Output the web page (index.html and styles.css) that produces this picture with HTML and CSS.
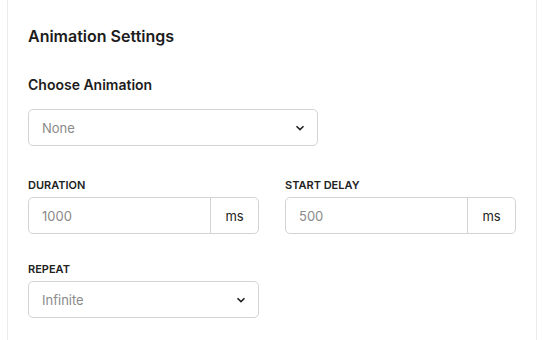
FILE: index.html
```html
<!DOCTYPE html>
<html lang="en">
  <head>
    <meta charset="UTF-8" />
    <title>Animation Settings</title>
    <link rel="stylesheet" href="styles.css">
  </head>
  <body>
    <div class="panel">
      <h2 class="panel-title">Animation Settings</h2>

      <h3 class="field-title">Choose Animation</h3>
      <div class="select select-wide">
        <span class="select-value">None</span>
        <svg class="chevron" width="10" height="6" viewBox="0 0 10 6"><path d="M1.5 1.2 L5 4.6 L8.5 1.2" fill="none" stroke="#222" stroke-width="1.6"/></svg>
      </div>

      <div class="row">
        <div class="field">
          <label class="label">Duration</label>
          <div class="input-group">
            <span class="input-value">1000</span>
            <span class="addon">ms</span>
          </div>
        </div>
        <div class="field">
          <label class="label">Start Delay</label>
          <div class="input-group">
            <span class="input-value">500</span>
            <span class="addon">ms</span>
          </div>
        </div>
      </div>

      <div class="row">
        <div class="field">
          <label class="label">Repeat</label>
          <div class="select">
            <span class="select-value">Infinite</span>
            <svg class="chevron" width="10" height="6" viewBox="0 0 10 6"><path d="M1.5 1.2 L5 4.6 L8.5 1.2" fill="none" stroke="#222" stroke-width="1.6"/></svg>
          </div>
        </div>
      </div>
    </div>
  </body>
</html>
```

FILE: styles.css
```css
body,
html {
  margin: 0;
  padding: 0;
  height: 100%;
  background-color: #fff;
  font-family: "Inter", "Liberation Sans", sans-serif;
  overflow: hidden;
}

.panel {
  margin-left: 7px;
  width: 530px;
  height: 100%;
  border-left: 1px solid #ececec;
  border-right: 1px solid #ececec;
  padding: 26px 20px 0 20px;
  box-sizing: border-box;
}

.panel-title {
  margin: 0;
  font-size: 16px;
  line-height: 20px;
  font-weight: 600;
  color: #1c1c1c;
}

.field-title {
  margin: 30px 0 15px;
  font-size: 14px;
  line-height: 18px;
  font-weight: 600;
  color: #1c1c1c;
}

.select,
.input-group {
  display: flex;
  align-items: center;
  height: 37px;
  border: 1px solid #d4d4d4;
  border-radius: 5px;
  box-sizing: border-box;
  font-size: 13px;
}

.select {
  justify-content: space-between;
  padding: 0 12px 0 13px;
}

.select-wide {
  width: 290px;
}

.select-value,
.input-value {
  color: #8a8a8a;
}

.chevron {
  display: block;
}

.row {
  display: grid;
  grid-template-columns: 1fr 1fr;
  gap: 26px;
  margin-top: 32px;
}

.row + .row {
  margin-top: 28px;
}

.label {
  display: block;
  font-size: 11px;
  line-height: 14px;
  font-weight: 600;
  text-transform: uppercase;
  color: #222;
  margin-bottom: 5px;
}

.input-group {
  overflow: hidden;
}

.input-value {
  flex: 1;
  padding-left: 13px;
}

.addon {
  width: 47px;
  height: 100%;
  display: flex;
  align-items: center;
  justify-content: center;
  border-left: 1px solid #d4d4d4;
  color: #222;
  font-size: 13px;
}
```
